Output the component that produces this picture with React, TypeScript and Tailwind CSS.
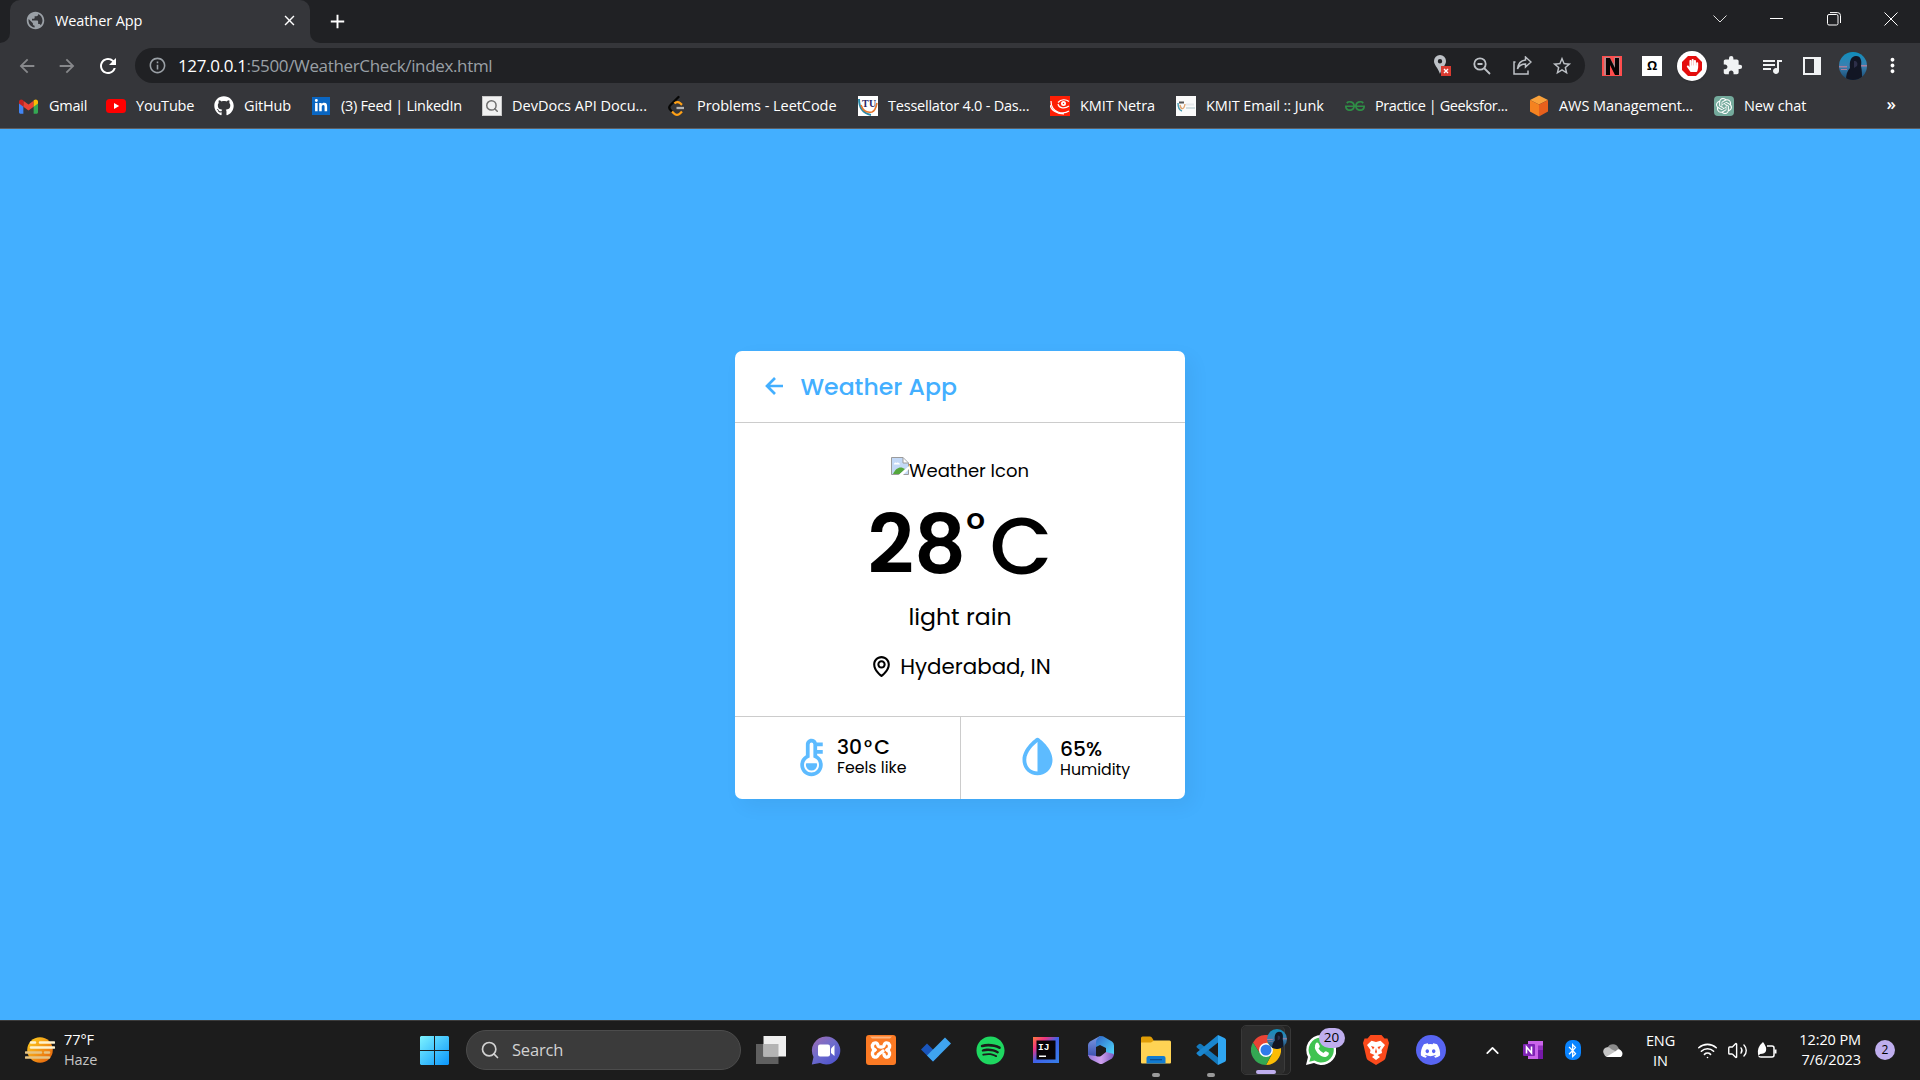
import React from "react";
import { BiLeftArrowAlt, BiMap, BiSolidThermometer, BiSolidDropletHalf } from "react-icons/bi";
import { FaGithub, FaDiscord, FaSpotify, FaLinkedinIn, FaBluetoothB, FaHandPaper } from "react-icons/fa";
import { SiGeeksforgeeks, SiOpenai } from "react-icons/si";
import {
  MdArrowBack, MdArrowForward, MdRefresh, MdInfoOutline, MdPublic, MdClose, MdAdd, MdStarBorder,
  MdExtension, MdQueueMusic, MdMoreVert,
} from "react-icons/md";
import { Search, ChevronUp, Wifi, Volume2 } from "lucide-react";

const Gmail = () => (
  <svg viewBox="0 0 24 18" className="w-[19px] h-[15px]">
    <path fill="#4285f4" d="M0 3v13.4C0 17.3.7 18 1.6 18h3.9V7z" />
    <path fill="#34a853" d="M24 3v13.4c0 .9-.7 1.6-1.6 1.6h-3.9V7z" />
    <path fill="#ea4335" d="M5.5 9.300V1.600L12 6.500l6.500-4.900v7.700L12 14.200z" />
    <path fill="#c5221f" d="M0 3C0 .3 2.800-.9 4.900.9l.6.500v7.900L0 5.200z" />
    <path fill="#fbbc04" d="M24 3c0-2.700-2.800-3.900-4.900-2.100l-.6.500v7.900L24 5.200z" />
  </svg>
);

const YouTube = () => (
  <svg viewBox="0 0 20 14" className="h-3.5 w-5"><rect width="20" height="14" rx="3.500" fill="#f00" /><path fill="#fff" d="m8 4 5.200 3L8 10z" /></svg>
);

const LeetCode = () => (
  <svg viewBox="0 0 20 22" className="w-5 h-[22px]" fill="none" strokeWidth="2.300" strokeLinejoin="round">
    <path stroke="#070706" strokeLinecap="round" d="M11.500 2 3.500 10c-1.500 1.500-1.500 3.500 0 5l1.500 1.500" />
    <path stroke="#ffa116" d="m15 16.500-2 2c-1.700 1.700-4.300 1.700-6 0l-2-2M7.500 8.500c1.500-1.800 4-1.800 5.500-.500l2 1.800" />
    <path stroke="#b3b3b3" d="M9.500 13h7.500" />
  </svg>
);

const Magnify = () => (
  <span className="grid size-5 place-items-center border border-[#c8c8c8] bg-[#f1f1f1] text-[#707070]">
    <Search size={14} strokeWidth={2.600} />
  </span>
);

const Tu = () => (
  <svg viewBox="0 0 20 20" className="size-5" fill="none">
    <path fill="#fff" d="M0 0h20v20H0z" />
    <path d="M1 3c0 8 3 14 12 16" stroke="#2b8aa8" strokeWidth="2" />
    <path d="M3 9c2 6 6 8 11 7 3-1 4-4 5-9" stroke="#e5752c" strokeWidth="1.600" />
    <text x="4" y="10.500" fontSize="10" fontWeight="bold" fontFamily="Liberation Serif, serif" fill="#2a2564" textLength="14">TU</text>
  </svg>
);

const Netra = () => (
  <svg viewBox="0 0 20 20" className="size-5" fill="none" stroke="#fff">
    <path fill="#fe1f05" stroke="none" d="M0 0h20v20H0z" />
    <path strokeWidth="1.200" d="M8 6.500c3-3.500 8-3.500 11-1M8 8c1 4.500 7 5 11 2M1 5c0 4 2 9 7 11 4 1.500 8 1 11-1M0 9c1 5 6 9 14 9" />
    <circle cx="13.500" cy="7.500" r="1.600" strokeWidth="1.800" />
  </svg>
);

const KmitMail = () => (
  <svg viewBox="0 0 20 20" className="size-5" fill="none">
    <path fill="#fafafa" d="M0 0h20v20H0z" />
    <path d="M2 7c0 5 1 7 4 8" stroke="#4b9fb5" strokeWidth="1.500" />
    <path d="M4 9c1 5 4 5 5-1" stroke="#e0a470" strokeWidth="1.400" />
    <path d="M3 6.500h5" stroke="#555" strokeWidth="2" />
    <path d="M10 8.500h8" stroke="#e6e9eb" strokeWidth="2" /><path d="M10 12h9" stroke="#c4d4d9" strokeWidth="1.500" />
  </svg>
);

const Aws = () => (
  <svg viewBox="0 0 20 22" className="h-[22px] w-5">
    <path fill="#f9a13b" d="m10 .5 9 4.500-9 4.500L1 5z" />
    <path fill="#f58220" d="M1 5l9 4.500v12L1 16.500z" />
    <path fill="#e8601c" d="M19 5l-9 4.500v12l9-5z" />
  </svg>
);

const bookmarks = [
  { label: "Gmail", icon: <Gmail />, box: "w-[87px] tracking-[-0.25px]" },
  { label: "YouTube", icon: <YouTube />, box: "w-[108px] tracking-[-0.2px]" },
  { label: "GitHub", icon: <FaGithub className="size-5 text-white" />, box: "w-[97px] tracking-[-0.15px]" },
  { label: "(3) Feed | LinkedIn", icon: <span className="grid size-[18px] place-items-center bg-[#0a66c2]"><FaLinkedinIn className="size-3.5" /></span>, box: "w-[171px] tracking-[-0.3px]" },
  { label: "DevDocs API Docu...", icon: <Magnify />, box: "w-[185px] tracking-[0px]" },
  { label: "Problems - LeetCode", icon: <LeetCode />, box: "w-[191px] tracking-[-0.05px]" },
  { label: "Tessellator 4.0 - Das...", icon: <Tu />, box: "w-[192px] tracking-[-0.22px]" },
  { label: "KMIT Netra", icon: <Netra />, box: "w-[126px] tracking-[-0.1px]" },
  { label: "KMIT Email :: Junk", icon: <KmitMail />, box: "w-[169px] tracking-[-0.07px]" },
  { label: "Practice | Geeksfor...", icon: <SiGeeksforgeeks className="size-5 text-[#2f8d46]" />, box: "w-[184px] tracking-[-0.4px]" },
  { label: "AWS Management...", icon: <Aws />, box: "w-[185px] tracking-[-0.08px]" },
  { label: "New chat", icon: <span className="grid size-5 place-items-center rounded-sm bg-[#74aa9c]"><SiOpenai className="size-4 text-white" /></span>, box: "w-[120px] tracking-[-0.1px]" },
];

function Avatar({ className }: { className: string }) {
  return (
    <svg viewBox="0 0 28 28" className={className}>
      <defs>
        <clipPath id="round"><circle cx="14" cy="14" r="14" /></clipPath>
        <linearGradient id="sky" x1="0" y1="0" x2="0" y2="1">
          <stop offset="0" stopColor="#0e8fbd" /><stop offset=".5" stopColor="#3b7fb0" /><stop offset="1" stopColor="#15486e" />
        </linearGradient>
      </defs>
      <g clipPath="url(#round)">
        <path fill="url(#sky)" d="M0 0h28v28H0z" />
        <path fill="#a57f9f" d="M0 14h8v1.500H0zM2 17h6v1H2zM22 13h6v1.500h-6z" />
        <path fill="#121624" d="M7 28c0-5 1-9 4-12-1-7 1-12 6-12s6 5 5 10c1 4 1 9 1 14z" />
        <path fill="#2d2f49" d="M15 9c3 0 4 2 3 5l-3 2z" />
      </g>
    </svg>
  );
}

const Cell = ({ children, className = "w-10" }: { children?: React.ReactNode; className?: string }) => (
  <div className={"flex h-full shrink-0 items-center justify-center " + className}>{children}</div>
);

function BrowserChrome() {
  return (
    <header className="h-[129px] shrink-0 border-b border-[#5d5e62] bg-[#35363a] text-white">
      <div className="flex h-[43px] bg-[#202124]">
        <div className="flex w-2.5 items-end bg-[#35363a]"><div className="h-full w-2.5 rounded-br-[10px] bg-[#202124]" /></div>
        <div className="flex w-[300px] items-center rounded-t-[10px] bg-[#35363a] pl-[15px] pr-3 pb-0.5">
          <MdPublic className="size-[21px] text-[#9aa0a6]" />
          <span className="ml-[9px] grow text-[14.500px] tracking-[-0.1px]">Weather App</span>
          <MdClose className="size-[17px]" />
        </div>
        <div className="flex w-2.5 bg-[#35363a]"><div className="h-full w-2.5 rounded-bl-[10px] bg-[#202124]" /></div>
        <div className="flex w-[35px] items-center justify-center pb-px"><MdAdd className="size-[23px]" /></div>
        <div className="ml-auto flex h-[37px]">
          <Cell className="w-[57px]"><svg className="h-2 w-3.5" viewBox="0 0 14 8" fill="none" stroke="#ddd"><path d="m.5.5 6.500 6.500L13.500.5" /></svg></Cell>
          <Cell className="w-[57px]"><div className="h-px w-[13px] bg-white" /></Cell>
          <Cell className="w-[57px]"><svg className="size-3.5" viewBox="0 0 14 14" fill="none" stroke="#fff"><rect x=".5" y="2.500" width="10.500" height="10.500" rx="1.500" /><path d="M3 .6h7.500a3 3 0 0 1 3 3V11" /></svg></Cell>
          <Cell className="w-[58px]"><svg className="size-3.5" viewBox="0 0 14 14" stroke="#fff"><path d="m.5.5 13 13m0-13-13 13" /></svg></Cell>
        </div>
      </div>
      <div className="flex h-[45px] items-center pl-[7px]">
        <Cell><MdArrowBack className="size-[22px] text-[#87888b]" /></Cell>
        <Cell><MdArrowForward className="size-[22px] text-[#87888b]" /></Cell>
        <Cell className="w-[41px]"><MdRefresh className="size-6" /></Cell>
        <div className="ml-[7px] flex h-[35px] w-[1450px] items-center rounded-full bg-[#202124] text-[#bdc1c6]">
          <Cell className="w-[43px] pl-px"><MdInfoOutline className="size-[19px] text-[#9aa0a6]" /></Cell>
          <span className="grow text-[17px] tracking-[-0.35px] text-[#9aa0a6]"><span className="text-white">127.0.0.1</span>:5500/WeatherCheck/index.html</span>
          <Cell className="w-10">
            <svg className="h-[23px] w-[19px]" viewBox="0 0 19 23">
              <path fill="#bdc1c6" fillRule="evenodd" d="M7 1a6 6 0 0 1 6 6c0 4-3.500 6-6 13C4.500 13 1 11 1 7a6 6 0 0 1 6-6zm0 4a2.200 2.200 0 1 0 0 4.400A2.200 2.200 0 0 0 7 5z" />
              <path fill="#d93a30" d="M8 12h10v10H8z" /><path stroke="#fff" strokeWidth="1.400" d="m11 15 4 4m0-4-4 4" />
            </svg>
          </Cell>
          <Cell>
            <svg className="size-[18px]" viewBox="0 0 18 18" fill="none" stroke="currentColor" strokeWidth="1.800"><circle cx="7" cy="7" r="5.700" /><path d="m11 11 6 6M4.500 7h5" /></svg>
          </Cell>
          <Cell>
            <svg className="size-[19px]" viewBox="0 0 19 19" fill="none" stroke="currentColor" strokeWidth="1.500"><path d="M2.500 6H1v12h14v-3.500M12.500 1l5.500 5-5.500 5V8C8.500 8 6 9.500 4.500 13 5 8 8 4.500 12.500 4z" /></svg>
          </Cell>
          <Cell><MdStarBorder className="size-[22px]" /></Cell>
          <div className="w-[3px]" />
        </div>
        <div className="w-[7px]" />
        <Cell><svg className="size-5" viewBox="0 0 20 20"><path fill="#ff4d4d" d="M0 0h20v20H0z" /><path fill="none" stroke="#a79296" strokeWidth="1.500" d="M3 19V2h4l6 9V2h4v17" /><path fill="#080405" d="M4 2h4l5 10V2h4v17h-4L8 9v10H4z" /></svg></Cell>
        <Cell><div className="grid size-5 place-items-center bg-white text-[13px] font-bold leading-none text-black">Ω</div></Cell>
        <Cell>
          <div className="relative grid size-[30px] place-items-center rounded-full bg-white shadow">
            <svg viewBox="0 0 20 20" className="size-5"><path fill="#e40d0d" d="M6 0h8l6 6v8l-6 6H6l-6-6V6z" /></svg>
            <FaHandPaper className="absolute size-[13px] text-white" />
          </div>
        </Cell>
        <Cell><MdExtension className="size-[21px] text-[#f1f3f4]" /></Cell>
        <Cell><MdQueueMusic className="size-6 text-[#f1f3f4]" /></Cell>
        <Cell><div className="h-[18px] w-[18px] border-[2.500px] border-r-[7px] border-[#f1f3f4]" /></Cell>
        <Cell className="w-[42px]"><Avatar className="size-7" /></Cell>
        <Cell className="w-9"><MdMoreVert className="size-[23px]" /></Cell>
      </div>
      <div className="flex h-9 items-center pl-[18px] text-[14.500px]">
        {bookmarks.map((b) => (
          <div key={b.label} className={"flex shrink-0 items-center gap-[10px] whitespace-nowrap " + b.box}>
            <span className="flex w-[21px] justify-center">{b.icon}</span>
            <span className="-mt-px">{b.label}</span>
          </div>
        ))}
        <span className="-mt-1.5 ml-auto mr-[24px] text-[17px] font-semibold leading-none">»</span>
      </div>
    </header>
  );
}

const BrokenImage = () => (
  <svg viewBox="0 0 18 18" className="size-[18px] shrink-0">
    <path fill="#c3d9f7" stroke="#9b9b9b" d="M.5.5H12l5.500 5.500v11.500H.5z" />
    <path fill="#fff" d="M3 7c0-1.500 2-2 2.500-1C7 5 8.500 6 9 7.500H3zM12 1v5h5z" />
    <path stroke="#9b9b9b" fill="none" d="M12 .5V6h5.500" />
    <path fill="#54a73c" d="M2 17c3-7 8-8 12-5l-5 5z" />
    <path fill="#fff" d="m7.500 18 10.500-9v3l-6 6z" />
  </svg>
);

function WeatherCard() {
  return (
    <section className="flex h-[448px] w-[450px] flex-col rounded-[7px] bg-white font-[Poppins,Inter,sans-serif] text-black shadow-[7px_7px_20px_rgba(0,0,0,0.05)]">
      <div className="flex h-[72px] items-center border-b border-[#ccc] pl-6 text-[#43afff]">
        <BiLeftArrowAlt className="size-8" />
        <h1 className="ml-[9.500px] pt-px text-[23.600px] font-medium">Weather App</h1>
      </div>
      <div className="flex h-[293px] flex-col items-center">
        <div className="mt-[34px] flex h-[26px]"><BrokenImage /><span className="pt-[2px] text-[18px] leading-[24px]">Weather Icon</span></div>
        <div className="mt-[24px] flex h-[77px] items-start">
          <span className="text-[81px] font-semibold leading-[76px]">28</span>
          <span className="mr-[4.500px] text-[45px] font-medium leading-[44px]">°</span>
          <span className="text-[81px] font-medium leading-[77px]">C</span>
        </div>
        <div className="mt-[15px] text-[23.600px] leading-[36px]">light rain</div>
        <div className="mt-[15px] flex items-center gap-[6px] text-[21.400px] leading-[34px]"><BiMap className="size-[25px]" /><span>Hyderabad, IN</span></div>
      </div>
      <div className="flex h-[83px] border-t border-[#ccc]">
        <div className="flex w-[226px] items-start border-r border-[#ccc] pl-[54px] pt-[17px]">
          <BiSolidThermometer className="mt-px size-[45px] text-[#5dbbff]" />
          <div className="ml-[3px]">
            <p className="flex pt-px text-[20.250px] font-medium leading-[25px]">30<span className="mx-[2px] text-[19px]">°</span>C</p>
            <p className="text-[15.750px] leading-4">Feels like</p>
          </div>
        </div>
        <div className="flex items-start pl-[54px] pt-[18px]">
          <BiSolidDropletHalf className="-mt-px size-[45px] text-[#5dbbff]" />
          <div><p className="pt-0.5 text-[20.250px] font-medium leading-[25px]">65%</p><p className="text-[15.750px] leading-[15px]">Humidity</p></div>
        </div>
      </div>
    </section>
  );
}

const Haze = () => (
  <svg viewBox="0 0 30 28" className="h-7 w-[30px]">
    <defs><linearGradient id="sun" x1="0" y1="0" x2="1" y2="1"><stop stopColor="#ffd321" /><stop offset="1" stopColor="#e45a0b" /></linearGradient></defs>
    <circle cx="15" cy="14" r="12.800" fill="url(#sun)" />
    <g strokeWidth="2.600" strokeLinecap="round"><path stroke="#fff3cf" d="M6 6.500h4M15 6.500h14M6 11.500h23" /><path stroke="#e6c483" d="M1 16.500h15M20 16.500h4M1 21.500h23" /></g>
  </svg>
);
const Windows = () => (
  <svg viewBox="0 0 29 29" className="size-[29px]">
    <defs><linearGradient id="win" x1="0" y1="0" x2="1" y2="1"><stop stopColor="#7df3ff" /><stop offset="1" stopColor="#0a95fb" /></linearGradient></defs>
    <path fill="url(#win)" d="M1 0h13v14H0V1zM15 0h13l1 1v13H15zM0 15h14v14H1l-1-1zM15 15h14v13l-1 1H15z" />
  </svg>
);
const TaskView = () => (
  <svg viewBox="0 0 30 28" className="h-7 w-[30px]"><path fill="#5f5f5f" d="M0 8h22.500v20H0z" /><path fill="#efefef" d="M7.500 0H30v20.500H7.500z" /><path fill="#b4b4b4" d="M7.500 8h15v12.500h-15z" /></svg>
);
const Chat = () => (
  <svg viewBox="0 0 30 29" className="h-[29px] w-[30px]">
    <defs><linearGradient id="chat" x1="0" y1="0" x2=".8" y2="1"><stop stopColor="#a26bb0" /><stop offset=".5" stopColor="#6f6ccc" /><stop offset="1" stopColor="#4d52cc" /></linearGradient></defs>
    <path fill="url(#chat)" d="M15 .5a14 14 0 1 1-6 26.500L.8 28.500 2.500 21A14 14 0 0 1 15 .5z" />
    <rect x="7" y="8.500" width="12" height="12" rx="2" fill="#fff" /><path fill="#fff" d="M20 12.500 23.500 9v11L20 17z" />
  </svg>
);
const Xampp = () => (
  <svg viewBox="0 0 30 30" className="size-[30px]">
    <rect width="30" height="30" rx="3" fill="#fb7a24" /><path fill="#fdb37e" d="M4 1.500h22L24 3.500H6z" />
    <g fill="none" stroke="#fff" strokeWidth="3.400" strokeLinecap="round" strokeLinejoin="round">
      <path d="M9 15a4 4 0 0 1-1.500-6.500Q11 6.500 12 10.500q.5 1.500 3 1.500t3-1.500q1-4 4.500-2A4 4 0 0 1 21 15" />
      <path d="M9 15a4 4 0 0 0-1.500 6.500Q11 23.500 12.500 19.500L17 16M21 15a4 4 0 0 1 1.500 6.500q-3.500 2-4.500-2" />
    </g>
  </svg>
);
const Todo = () => (
  <svg viewBox="0 0 30 26" className="h-[26px] w-[30px]"><path fill="#1a56bd" d="m0 12.500 6-6 12 12-6 6z" /><path fill="#3fa4ef" d="M6 18.500 24 .5 30 6.500 12 24.500z" /></svg>
);
const IntelliJ = () => (
  <svg viewBox="0 0 26 26" className="size-[26px]">
    <defs><linearGradient id="ij" x1="0" y1="0" x2="1" y2="1"><stop stopColor="#ff7a3d" /><stop offset=".25" stopColor="#f0357f" /><stop offset=".5" stopColor="#3f62ea" /><stop offset="1" stopColor="#377fe8" /></linearGradient></defs>
    <path fill="url(#ij)" d="M0 0h26v26H0z" /><path fill="#080509" d="M3.500 3.500h19v19h-19z" />
    <text x="5" y="13" fontSize="9.500" fontWeight="bold" fontFamily="Liberation Mono, monospace" fill="#fff">IJ</text><path fill="#fff" d="M6 18.500h7V20H6z" />
  </svg>
);
const M365 = () => (
  <svg viewBox="0 0 28 28" className="size-7">
    <defs>
      <linearGradient id="ma" x1="0" y1="0" x2="0" y2="1"><stop stopColor="#7d9be6" /><stop offset="1" stopColor="#3b4fae" /></linearGradient>
      <linearGradient id="mb" x1="0" y1="0" x2="1" y2="1"><stop stopColor="#2f63c6" /><stop offset="1" stopColor="#4fdcff" /></linearGradient>
      <linearGradient id="mc" x1="0" y1="0" x2="1" y2="0"><stop stopColor="#8f74d8" /><stop offset=".5" stopColor="#cfa0ee" /><stop offset="1" stopColor="#7a5ac0" /></linearGradient>
    </defs>
    <path fill="url(#ma)" d="M13 0 3 5.500Q1 7 1 9v11l8 1V9q0-3 3-5z" />
    <path fill="url(#mb)" d="m13 0 3 .2L25 5.500q2 1.500 2 4V19l-8-2v-5l-6-3-4 2V6q0-3 4-6z" />
    <path fill="url(#mc)" d="M1 19q1 3 3 4.500l8 4q2 1 4 0l9-5q2-2 2-4.500l-8-2-5 4q-2 1-5 0z" />
  </svg>
);
const Explorer = () => (
  <svg viewBox="0 0 30 28" className="h-7 w-[30px]">
    <path fill="#e09d06" d="M0 2q0-1.500 1.500-1.500H9q1.500 0 2.500 2L13 5v4H0z" /><path fill="#ffd354" d="M0 6.500h10l3-2h15.500Q30 4.500 30 6v20.500q0 1-1 1H1q-1 0-1-1z" />
    <path fill="#117bd1" d="M5.500 22q0-2 2-2h15q2 0 2 2v5.500h-19z" /><path fill="#0a4f93" d="M9 23h12v1.300H9z" />
  </svg>
);
const VsCode = () => (
  <svg viewBox="0 0 30 30" className="size-[30px]">
    <path fill="#1479bd" d="M.8 11 3 9q1-.7 2 0l17 13.500V30L.8 12.500q-.8-.8 0-1.500z" />
    <path fill="#1a86cf" d="M.8 19 3 21q1 .7 2 0L22 7.500V0L.8 17.500q-.8.8 0 1.500z" />
    <path fill="#2fa6f2" d="M22 0l6.500 3Q30 3.800 30 5v20q0 1.300-1.500 2L22 30z" />
  </svg>
);
const Chrome = () => (
  <svg viewBox="0 0 30 30" className="size-[30px]">
    <path fill="#ea4335" d="M2 7.500a15 15 0 0 1 26 0L15 8.500l-6 10z" />
    <path fill="#fbbc05" d="M28 7.500A15 15 0 0 1 15 30l6-11 .5-5-6.500-6.500z" />
    <path fill="#34a853" d="M2 7.500A15 15 0 0 0 15 30l6-11.500-6 3.500-6-3.500z" />
    <circle cx="15" cy="15" r="7" fill="#fff" /><circle cx="15" cy="15" r="5.500" fill="#2f7bea" />
  </svg>
);

const apps: { name: string; icon: React.ReactNode; running?: boolean }[] = [
  { name: "taskview", icon: <TaskView /> },
  { name: "chat", icon: <Chat /> },
  { name: "xampp", icon: <Xampp /> },
  { name: "todo", icon: <Todo /> },
  { name: "spotify", icon: <FaSpotify className="size-[29px] text-[#1ed760]" /> },
  { name: "intellij", icon: <IntelliJ /> },
  { name: "m365", icon: <M365 /> },
  { name: "explorer", icon: <Explorer />, running: true },
  { name: "vscode", icon: <VsCode />, running: true },
];

function Taskbar() {
  return (
    <footer className="flex h-[60px] shrink-0 items-center border-t border-[#3b3b3b] bg-[#1c1c1c] pb-px text-white">
      <div className="flex w-[406px] shrink-0 items-center pl-[25px]">
        <Haze />
        <div className="ml-[9px] text-[14.500px] leading-5 tracking-[-0.1px]"><p>77°F</p><p className="text-[#c4c4c4]">Haze</p></div>
      </div>
      <Cell className="w-[56px]"><Windows /></Cell>
      <div className="ml-1 mr-[2px] flex h-10 w-[275px] shrink-0 items-center rounded-full border border-[#4c4c4c] bg-[#3b3b3b] pl-[13px] text-[#d2d2d2]">
        <Search className="size-5" /><span className="ml-[12px] pt-px text-[16.500px] tracking-[-0.2px]">Search</span>
      </div>
      {apps.map((a) => (
        <div key={a.name} className="relative flex h-full w-[55px] shrink-0 items-center justify-center">
          {a.icon}
          {a.running && <span className="absolute bottom-0.5 h-1 w-2 rounded-full bg-[#9a9a9a]" />}
        </div>
      ))}
      <div className="flex h-[50px] w-[55px] shrink-0 items-center pl-[2.500px]">
        <div className="flex h-[50px] w-[50px] rounded-[5px] border border-[#383838] bg-[#242424]">
          <div className="relative flex h-[48px] w-[43px] items-center justify-center rounded-[5px] border-r border-[#3c3c3c] bg-[#2d2d2d] pl-1.5">
            <Chrome />
            <span className="absolute -right-[3px] top-[3px]"><Avatar className="size-5" /></span>
            <span className="absolute bottom-0 h-1 w-5 rounded-full bg-[#bfaeee]" />
          </div>
        </div>
      </div>
      <Cell className="w-[55px]">
        <div className="relative">
          <svg viewBox="0 0 30 30" className="size-[30px]"><path fill="#fff" d="M15 0a15 15 0 1 1-7 28L0 30l2-8A15 15 0 0 1 15 0z" /><path fill="#40c351" d="M15 2.500a12.500 12.500 0 1 1-6.500 23L3.300 26.800l1.400-5A12.500 12.500 0 0 1 15 2.500z" /><path fill="#fff" d="M10 8q1-1 2.300 0l1.500 3q.3 1-1.300 2.500 2 3.500 5 4.500 1.500-2 2.500-1.700l2.800 1.500q.5 3-3.300 4.200-4 .3-8-4Q7 12.500 10 8z" /></svg>
          <span className="absolute -right-[9px] -top-[7px] grid h-5 w-[26px] place-items-center rounded-full bg-[#bfaeee] text-[13.500px] leading-none text-black">20</span>
        </div>
      </Cell>
      <Cell className="w-[55px]">
        <svg viewBox="0 0 26 30" className="h-[30px] w-[26px]"><path fill="#fb4a1c" d="M7.500 0h11l3 3.500 3 0L26 8l-3.500 15q-.5 1.500-2 2.500L13 30l-7.500-4.500q-1.500-1-2-2.500L0 8l1.500-4.500h3z" /><path fill="#fff" d="m13 7 4.500-1.200L22 10l-3.500 5 .5 3-4.500 2 2.500 2-4 3-4-3 2.500-2L7 18l.5-3L4 10l4.500-4.200z" /><path fill="#fb4a1c" d="m8 11 3.500 1L10 14.500zM18 11l-3.500 1 1.500 2.500zM13 13l1 4-1 1.500-1-1.500z" /></svg>
      </Cell>
      <Cell className="w-[55px]"><span className="grid size-[30px] place-items-center rounded-full bg-[#5865f2]"><FaDiscord className="size-[21px]" /></span></Cell>
      <div className="w-[14.500px] shrink-0" />
      <Cell><ChevronUp className="size-[21px]" /></Cell>
      <Cell>
        <svg viewBox="0 0 20 18" className="h-[18px] w-5"><path fill="#ca64ea" d="M5 0h15v18H5z" /><path fill="#9332bf" d="M15 4.500h5V9h-5z" /><path fill="#7719aa" d="M15 9h5v9h-5z" /><rect y="3" width="12" height="12" rx="1" fill="#7e22b5" /><path fill="none" stroke="#fff" strokeWidth="1.600" d="M3.500 12.500V6l5 6V5.500" /></svg>
      </Cell>
      <Cell><span className="grid h-5 w-4 place-items-center rounded-[7px] bg-[#0a84ff]"><FaBluetoothB className="size-[15px]" /></span></Cell>
      <Cell><svg viewBox="0 0 20 13" className="h-[13px] w-5"><path fill="#8b8b8b" d="M4 11a4 4 0 0 1 .5-7.500 6 6 0 0 1 11 .5L18 8z" /><path fill="#c4c4c4" d="M1 10a4 4 0 0 1 7-5l6 3-10 5q-2 0-3-3z" /><path fill="#fff" d="M3 13 13 7q2-3 5-.500 3 3 0 6.500z" /></svg></Cell>
      <div className="ml-2 w-10 shrink-0 pt-px text-center text-[14.500px] leading-5 tracking-[-0.1px]"><p>ENG</p><p>IN</p></div>
      <div className="ml-3 flex shrink-0 items-center gap-[9px] pl-[4.500px]">
        <Wifi className="size-[21px]" strokeWidth={1.800} />
        <Volume2 className="size-[21px]" strokeWidth={1.600} />
        <svg viewBox="0 0 20 17" className="h-[17px] w-5" fill="none" stroke="#fff" strokeWidth="1.500"><path d="M10 4h5q2 0 2 2v7q0 2-2 2H4q-2 0-2-1" /><path d="M18.500 7.500v4" strokeWidth="2" /><path fill="#fff" stroke="none" d="M1 12Q0 5 6 0q4 5 3 9-1 3-6 3l-1.500 2z" /></svg>
      </div>
      <div className="ml-auto w-[64px] shrink-0 whitespace-nowrap text-right text-[14.500px] leading-5 tracking-[-0.1px]"><p>12:20 PM</p><p>7/6/2023</p></div>
      <span className="ml-[14px] mr-[25px] grid size-5 shrink-0 place-items-center rounded-full bg-[#bfaeee] text-[12px] leading-none text-black">2</span>
    </footer>
  );
}

export default function App() {
  return (
    <div className="flex h-[1080px] w-[1920px] flex-col overflow-hidden font-['Segoe_UI','Open_Sans',sans-serif]">
      <BrowserChrome />
      <main className="flex grow items-center justify-center bg-[#43afff]"><WeatherCard /></main>
      <Taskbar />
    </div>
  );
}
